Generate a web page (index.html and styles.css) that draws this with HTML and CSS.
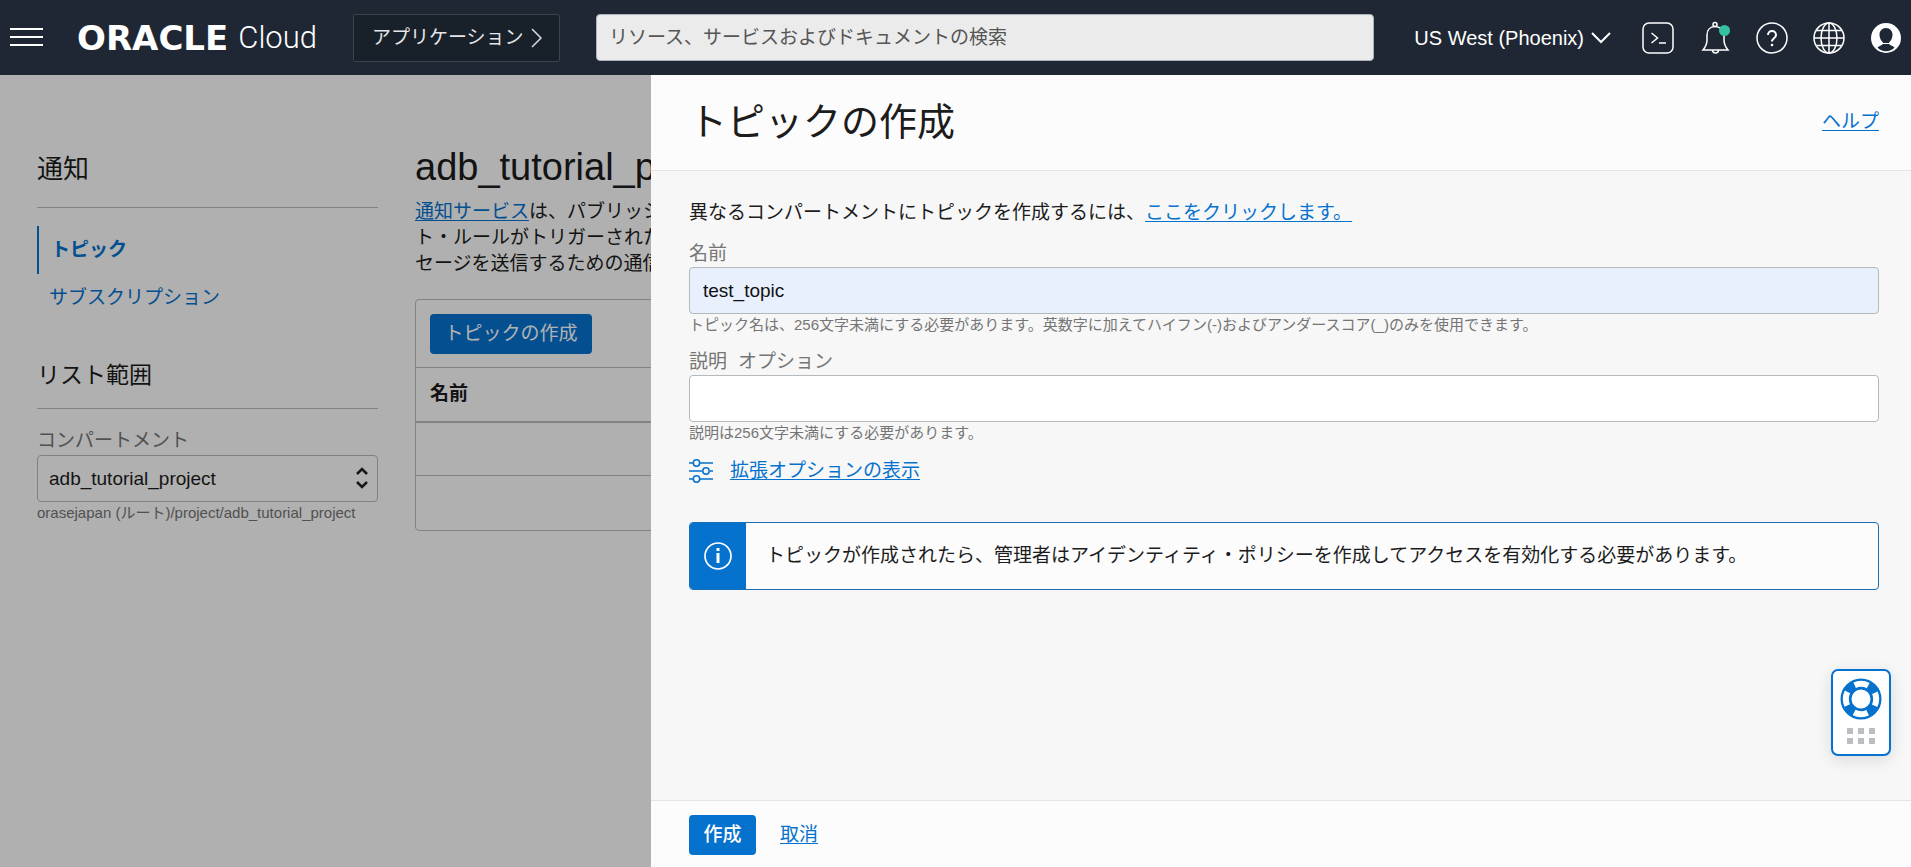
FILE: index.html
```html
<!DOCTYPE html>
<html lang="ja">
<head>
<meta charset="utf-8">
<meta name="viewport" content="width=device-width, initial-scale=1">
<title>トピックの作成</title>
<link rel="stylesheet" href="styles.css">
</head>
<body>
<header class="topbar">
  <button class="icon-btn menu-btn" type="button" aria-label="メニュー">
    <svg width="33" height="19" viewBox="0 0 33 19" fill="none" stroke="#fff" stroke-width="2"><path d="M0 1h33M0 9h33M0 17h33"/></svg>
  </button>
  <a class="brand" href="#"><span class="brand-oracle">ORACLE</span><span class="brand-cloud">Cloud</span></a>
  <button class="apps-btn" type="button">アプリケーション
    <svg width="12" height="20" viewBox="0 0 12 20" fill="none" stroke="#d8dadc" stroke-width="1.5"><path d="M1 1l9 9-9 9"/></svg>
  </button>
  <input class="search" type="search" aria-label="検索" placeholder="リソース、サービスおよびドキュメントの検索">
  <div class="top-actions">
    <button class="region-btn" type="button">US West (Phoenix)
      <svg width="20" height="13" viewBox="0 0 20 13" fill="none" stroke="#fff" stroke-width="2"><path d="M1 2l9 9 9-9"/></svg>
    </button>
    <button class="icon-btn" type="button" aria-label="Cloud Shell">
      <svg width="32" height="32" viewBox="0 0 32 32" fill="none" stroke="#fff" stroke-width="1.5"><rect x="1" y="1" width="30" height="30" rx="6"/><path d="M9.500 11l6 5-6 5M17 21h7"/></svg>
    </button>
    <button class="icon-btn" type="button" aria-label="お知らせ">
      <svg width="32" height="34" viewBox="0 0 32 34" fill="none" stroke="#fff" stroke-width="1.500"><circle cx="16" cy="3.500" r="2"/><path d="M16 5.500c-5 0-8 3.600-8 8.500v5c0 4-1.500 7-4 10h25c-2.500-3-4-6-4-10v-5c0-4.900-4-8.500-9-8.500z"/><path d="M13.500 29c0 4 6 4 6 0"/><circle cx="25.500" cy="9.500" r="5.500" fill="#35c1a0" stroke="none"/></svg>
    </button>
    <button class="icon-btn" type="button" aria-label="ヘルプ・メニュー">
      <svg width="32" height="32" viewBox="0 0 32 32" fill="none" stroke="#fff" stroke-width="1.500"><circle cx="16" cy="16" r="15"/><path d="M12 13c0-5.500 8-5.500 8 0 0 3-4 3.500-4 6.500" stroke-width="2"/><circle cx="16" cy="23" r="1.300" fill="#fff" stroke="none"/></svg>
    </button>
    <button class="icon-btn" type="button" aria-label="言語">
      <svg width="32" height="32" viewBox="0 0 32 32" fill="none" stroke="#fff" stroke-width="1.500"><circle cx="16" cy="16" r="15"/><ellipse cx="16" cy="16" rx="8" ry="15"/><path d="M16 1v30M1 16h30M3.500 8.500h25M3.500 23.500h25"/></svg>
    </button>
    <button class="icon-btn" type="button" aria-label="プロファイル">
      <svg width="32" height="32" viewBox="0 0 32 32"><circle cx="16" cy="16" r="15" fill="#fff"/><path d="M16 6c-4 0-6.500 3-6.500 6.500 0 3.500 1.500 6.500 3.500 8v1.500c-1.500 1.500-4 2-5.500 3.500 4.500 5 12.500 5 17 0-1.500-1.500-4-2-5.500-3.500v-1.500c2-1.500 3.500-4.500 3.500-8 0-3.500-2.500-6.500-6.500-6.500z" fill="#1e2733"/><path d="M13 21.500h6" stroke="#fff"/></svg>
    </button>
  </div>
</header>

<div class="workspace">
  <div class="page">
    <nav class="side" aria-label="通知">
      <h2 class="side-title">通知</h2>
      <ul class="side-list">
        <li><a class="side-link side-link-active" href="#" aria-current="page">トピック</a></li>
        <li><a class="side-link" href="#">サブスクリプション</a></li>
      </ul>
      <h3 class="side-title side-scope">リスト範囲</h3>
      <div class="scope-field">
        <label class="label" for="compartment">コンパートメント</label>
        <div class="select-box">
          <select class="control" id="compartment"><option>adb_tutorial_project</option></select>
          <svg class="select-arrows" width="14" height="22" viewBox="0 0 14 22" fill="none" stroke="#222" stroke-width="2.500"><path d="M2 7l5-5 5 5M2 15l5 5 5-5"/></svg>
        </div>
        <p class="hint">orasejapan (ルート)/project/adb_tutorial_project</p>
      </div>
    </nav>
    <main class="content">
      <h1 class="page-title">adb_tutorial_project</h1>
      <p class="intro"><a class="link" href="#">通知サービス</a>は、パブリッシ<br>ト・ルールがトリガーされた<br>セージを送信するための通信</p>
      <section class="card">
        <div class="card-tools"><button class="primary wide" type="button">トピックの作成</button></div>
        <table class="topics">
          <thead><tr><th scope="col">名前</th></tr></thead>
          <tbody><tr><td></td></tr><tr><td></td></tr></tbody>
        </table>
      </section>
    </main>
  </div>
  <div class="shade"></div>

  <form class="drawer" aria-labelledby="drawer-title">
    <header class="drawer-head">
      <h2 class="drawer-title" id="drawer-title">トピックの作成</h2>
      <a class="link" href="#">ヘルプ</a>
    </header>
    <div class="drawer-body">
      <p class="lead">異なるコンパートメントにトピックを作成するには、<a class="link" href="#">ここをクリックします。</a></p>
      <div class="field">
        <label class="label" for="name">名前</label>
        <input class="control filled" id="name" type="text" value="test_topic">
        <p class="hint">トピック名は、256文字未満にする必要があります。英数字に加えてハイフン(-)およびアンダースコア(_)のみを使用できます。</p>
      </div>
      <div class="field">
        <label class="label" for="desc">説明<span class="optional">オプション</span></label>
        <input class="control" id="desc" type="text">
        <p class="hint">説明は256文字未満にする必要があります。</p>
      </div>
      <div class="advanced">
        <svg width="25" height="26" viewBox="0 0 25 26" fill="none" stroke="#0572ce" stroke-width="1.500"><path d="M0 5h4M11 5h13M0 13h13M21 13h3M0 21h4M11 21h13"/><circle cx="7.500" cy="5" r="3.200"/><circle cx="17" cy="13" r="3.200"/><circle cx="7.500" cy="21" r="3.200"/></svg>
        <a class="link" href="#">拡張オプションの表示</a>
      </div>
      <div class="notice">
        <div class="notice-icon">
          <svg width="28" height="28" viewBox="0 0 28 28" fill="none" stroke="#fff" stroke-width="1.700"><circle cx="14" cy="14" r="13"/><path d="M14 11v10" stroke-width="3"/><path d="M14 6v3" stroke-width="3"/></svg>
        </div>
        <p class="notice-text">トピックが作成されたら、管理者はアイデンティティ・ポリシーを作成してアクセスを有効化する必要があります。</p>
      </div>
    </div>
    <footer class="drawer-foot">
      <button class="primary strong" type="button">作成</button>
      <a class="link" href="#">取消</a>
    </footer>
  </form>

  <button class="support" type="button" aria-label="サポート">
    <svg width="42" height="42" viewBox="0 0 42 42"><circle cx="21" cy="21" r="15" fill="none" stroke="#0572ce" stroke-width="11"/><circle cx="21" cy="21" r="15.200" fill="none" stroke="#fff" stroke-width="6" stroke-dasharray="14 9.876" stroke-dashoffset="7"/></svg>
    <svg width="28" height="16" viewBox="0 0 28 16" fill="#b9bcc0"><path d="M0 0h6v6H0zM11 0h6v6h-6zM22 0h6v6h-6zM0 10h6v6H0zM11 10h6v6h-6zM22 10h6v6h-6z"/></svg>
  </button>
</div>
</body>
</html>
```
FILE: styles.css
```css
* { box-sizing: border-box; }

body {
  margin: 0;
  min-height: 100vh;
  display: flex;
  flex-direction: column;
  font: 19px/26px "Liberation Sans", "Noto Sans CJK JP", sans-serif;
  color: #1c1c1c;
  background: #fcfcfc;
}

h1, h2, h3, p, ul { margin: 0; padding: 0; font-weight: 400; }
ul { list-style: none; }
button, input, select { font: inherit; color: inherit; }
button { cursor: pointer; }
svg { display: block; flex: none; }

/* Top bar */
.topbar {
  display: flex;
  align-items: center;
  height: 75px;
  padding: 0 9px 0 10px;
  background: #1e2733;
  color: #fff;
}
.icon-btn { padding: 0; border: 0; background: none; }
.brand {
  display: flex;
  align-items: center;
  gap: 10px;
  width: 240px;
  margin: 0 36px 0 34px;
  color: #fff;
  text-decoration: none;
  white-space: nowrap;
}
.brand-oracle { font: 700 34px/40px "DejaVu Sans", sans-serif; }
.brand-cloud { font: 300 31px/40px Roboto, sans-serif; }
.apps-btn {
  display: flex;
  align-items: center;
  gap: 7px;
  height: 48px;
  width: 207px;
  flex: none;
  padding: 0 18px;
  border: 1px solid #3b434d;
  border-radius: 2px;
  background: #18202a;
  color: #e4e5e7;
  white-space: nowrap;
}
.search {
  flex: 1;
  min-width: 0;
  height: 47px;
  margin: 0 40px 0 36px;
  padding: 0 12px;
  border: 1px solid #aab3bd;
  border-radius: 4px;
  background: #ebebeb;
}
.search::placeholder { color: #555; opacity: 1; }
.top-actions { display: flex; align-items: center; gap: 25px; flex: none; }
.region-btn {
  display: flex;
  align-items: center;
  gap: 7px;
  padding: 0;
  margin-right: 6px;
  border: 0;
  background: none;
  font-size: 20px;
}

/* Page under the drawer */
.workspace { position: relative; flex: 1; display: flex; }
.page { flex: 1; display: flex; gap: 37px; padding: 0 37px; }
.shade { position: absolute; inset: 0; background: rgba(0, 0, 0, .3); }
.link { color: #0572ce; text-decoration: underline; text-underline-offset: 2px; text-decoration-thickness: 1px; }

.side { width: 341px; flex: none; padding-top: 74px; }
.side-title { padding-bottom: 18px; border-bottom: 1px solid #bbbcbd; font-size: 26px; line-height: 40px; }
.side-scope { margin-top: 33px; padding-bottom: 13px; font-size: 23px; }
.side-list { padding-top: 18px; }
.side-link {
  display: block;
  padding: 11px 0 11px 12px;
  color: #0572ce;
  text-decoration: none;
}
.side-link-active { padding-left: 12px; border-left: 2px solid #0572ce; font-weight: 700; }
.scope-field { padding-top: 18px; }
.label { display: block; line-height: 28px; color: #757575; }
.control {
  display: block;
  width: 100%;
  height: 47px;
  padding: 0 13px;
  border: 1px solid #b4b9bd;
  border-radius: 4px;
  background: #fff;
}
.filled { background: #e8f0fe; color: #111; }
.select-box { position: relative; }
.select-box .control { appearance: none; padding: 0 11px; background: #fcfcfc; }
.select-arrows { position: absolute; right: 9px; top: 12px; pointer-events: none; }
.hint { font-size: 15px; line-height: 22px; color: #757575; }
.side .hint { white-space: nowrap; }

.content { flex: 1; min-width: 0; padding-top: 71px; }
.page-title { font-size: 38px; line-height: 42px; }
.intro { padding-top: 11px; }
.card { margin-top: 22px; border: 1px solid #bbbcbd; border-radius: 4px; }
.card-tools { padding: 14px 14px 13px; }
.primary {
  height: 40px;
  padding: 0 14px;
  border: 0;
  border-radius: 4px;
  background: #0572ce;
  color: #fff;
}
.wide { min-width: 162px; }
.strong { font-weight: 500; min-width: 67px; }
.topics { width: 100%; border-collapse: collapse; }
.topics th { height: 54px; padding: 0 14px; border-top: 1px solid #bbbcbd; border-bottom: 2px solid #bbbcbd; text-align: left; }
.topics td { height: 54px; border-top: 1px solid #bbbcbd; }

/* Drawer */
.drawer {
  position: absolute;
  inset: 0 0 0 auto;
  width: calc(100% - 651px);
  display: flex;
  flex-direction: column;
  background: #f7f7f7;
}
.drawer-head {
  display: flex;
  align-items: center;
  justify-content: space-between;
  height: 96px;
  padding: 0 32px 2px 38px;
  border-bottom: 1px solid #e4e4e4;
  background: #fcfcfc;
}
.drawer-title { font-size: 38px; line-height: 56px; }
.drawer-body { flex: 1; padding: 29px 32px 0 38px; }
.lead { padding-bottom: 14px; }
.field { padding-bottom: 12px; }
.field .label { line-height: 27px; }
.optional { margin-left: 11px; }
.advanced { display: flex; align-items: center; gap: 16px; padding-top: 2px; }
.notice {
  display: flex;
  min-height: 68px;
  margin-top: 38px;
  border: 1px solid #1a6fb5;
  border-radius: 4px;
  background: #fcfcfc;
  overflow: hidden;
}
.notice-icon { display: flex; align-items: center; justify-content: center; width: 56px; background: #0572ce; }
.notice-text { align-self: center; padding: 0 20px; }
.drawer-foot {
  display: flex;
  align-items: center;
  gap: 24px;
  height: 67px;
  padding: 2px 38px 0;
  border-top: 1px solid #e4e4e4;
  background: #fcfcfc;
}

/* Floating support launcher */
.support {
  position: absolute;
  right: 20px;
  bottom: 111px;
  display: flex;
  flex-direction: column;
  align-items: center;
  gap: 8px;
  padding: 7px 7px 10px;
  border: 2px solid #0572ce;
  border-radius: 7px;
  background: #fff;
  box-shadow: 0 4px 16px rgba(0, 0, 0, .12);
}
```
